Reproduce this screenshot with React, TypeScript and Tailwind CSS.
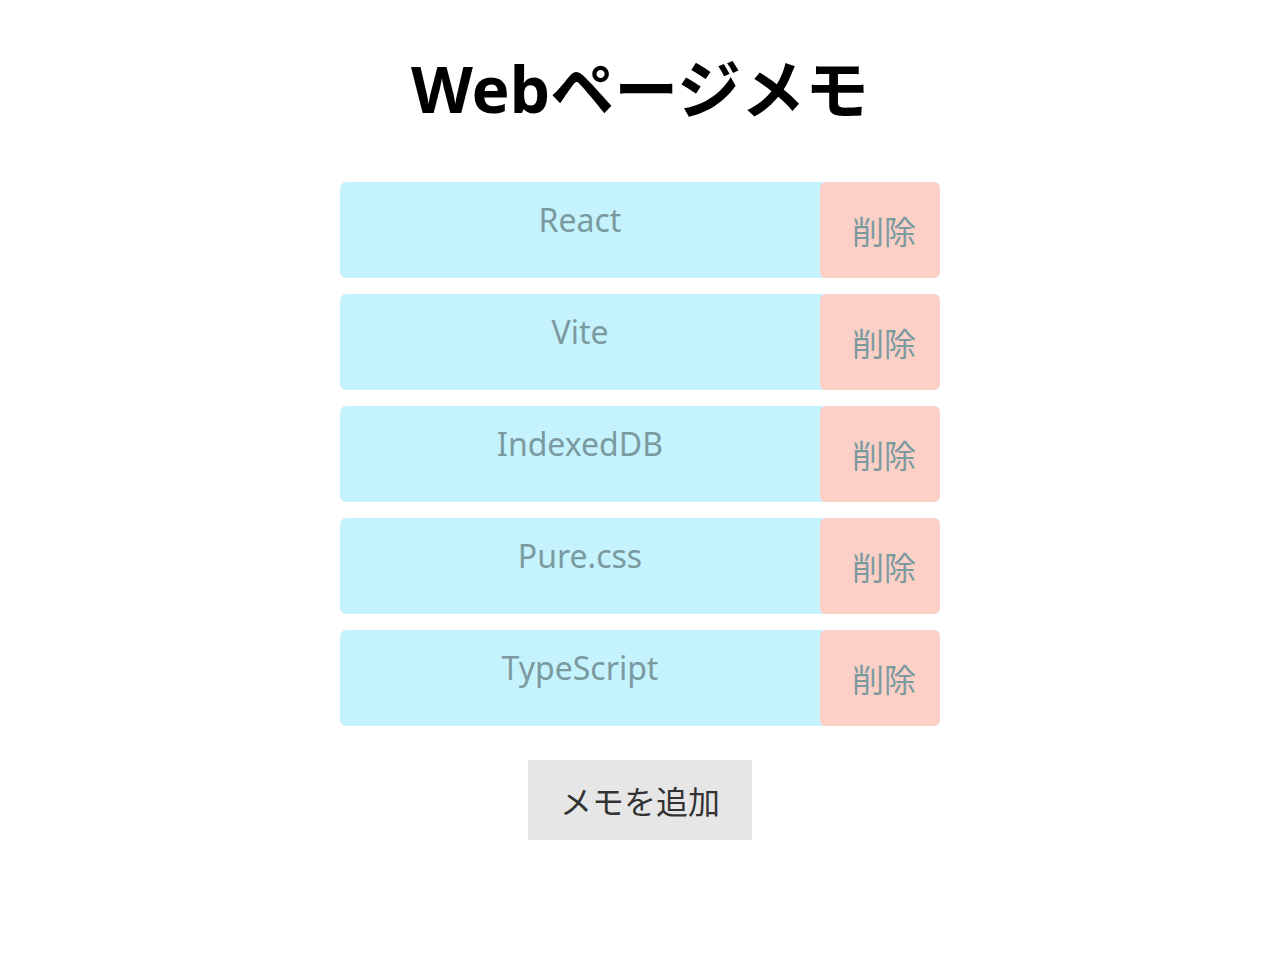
const memos = ["React", "Vite", "IndexedDB", "Pure.css", "TypeScript"];

export default function App() {
  return (
    <div className="min-h-[960px] bg-white font-['Noto_Sans','Noto_Sans_CJK_JP',sans-serif]">
      <h1 className="pt-[45px] text-center text-[64px] font-bold leading-[1.362] text-black">
        Webページメモ
      </h1>

      <ul className="mx-auto mt-[50px] flex w-[600px] flex-col gap-4">
        {memos.map((memo) => (
          <li key={memo} className="flex h-[96px] rounded-md bg-[#c5f3fd]">
            <div className="flex-1 pt-[16px] text-center text-[32px] leading-[1.362] text-[#7b9aa0]">
              {memo}
            </div>
            <button className="flex w-[120px] items-center justify-center rounded-md bg-[#fcd0c6] pl-[8px] pt-[4px] text-[32px] leading-[1.362] text-[#7b9aa0]">
              削除
            </button>
          </li>
        ))}
      </ul>

      <div className="mt-[34px] flex justify-center">
        <button className="h-[80px] w-[224px] rounded-[2px] bg-[#e6e6e6] pt-[4px] text-[32px] text-black/80">
          メモを追加
        </button>
      </div>
    </div>
  );
}
